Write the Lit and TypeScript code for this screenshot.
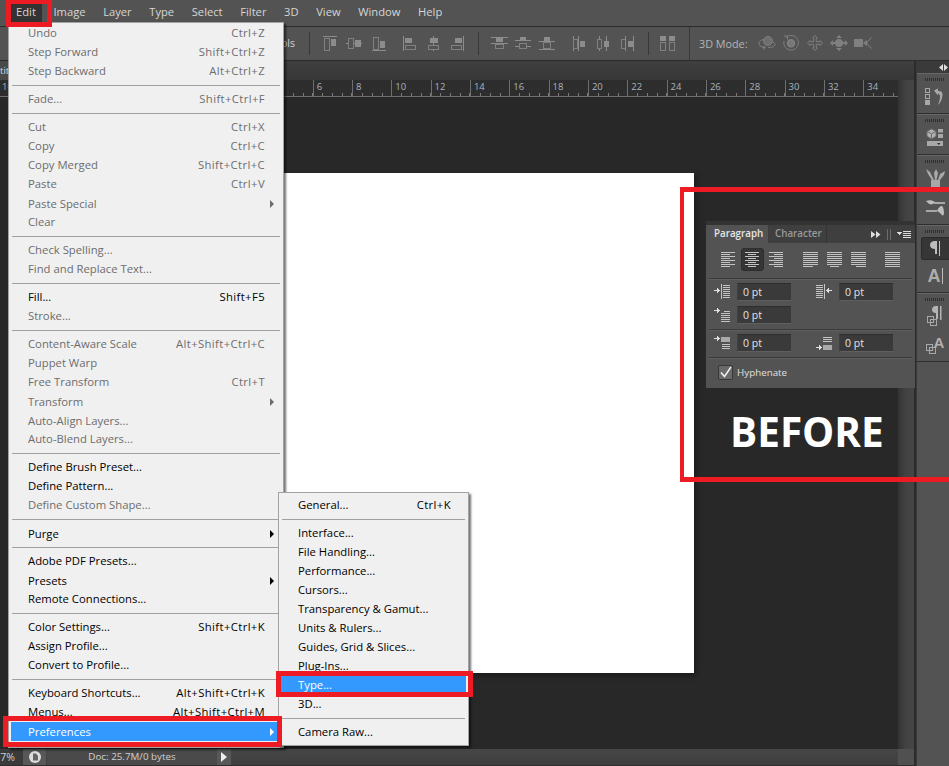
import { LitElement, html, css, svg } from "lit";
import { customElement } from "lit/decorators.js";

type Row = { t?: string; k?: string; d?: boolean; sub?: boolean; low?: boolean; hi?: boolean };
const S: Row = {};
const editMenu: Row[] = [
  { t: "Undo", k: "Ctrl+Z", d: true }, { t: "Step Forward", k: "Shift+Ctrl+Z", d: true }, { t: "Step Backward", k: "Alt+Ctrl+Z", d: true }, S,
  { t: "Fade...", k: "Shift+Ctrl+F", d: true }, S,
  { t: "Cut", k: "Ctrl+X", d: true }, { t: "Copy", k: "Ctrl+C", d: true }, { t: "Copy Merged", k: "Shift+Ctrl+C", d: true }, { t: "Paste", k: "Ctrl+V", d: true },
  { t: "Paste Special", d: true, sub: true, low: true }, { t: "Clear", d: true }, S,
  { t: "Check Spelling...", d: true }, { t: "Find and Replace Text...", d: true }, S,
  { t: "Fill...", k: "Shift+F5" }, { t: "Stroke...", d: true }, S,
  { t: "Content-Aware Scale", k: "Alt+Shift+Ctrl+C", d: true }, { t: "Puppet Warp", d: true }, { t: "Free Transform", k: "Ctrl+T", d: true },
  { t: "Transform", d: true, sub: true, low: true }, { t: "Auto-Align Layers...", d: true, low: true }, { t: "Auto-Blend Layers...", d: true }, S,
  { t: "Define Brush Preset..." }, { t: "Define Pattern..." }, { t: "Define Custom Shape...", d: true }, S,
  { t: "Purge", sub: true, low: true }, S,
  { t: "Adobe PDF Presets..." }, { t: "Presets", sub: true, low: true }, { t: "Remote Connections..." }, S,
  { t: "Color Settings...", k: "Shift+Ctrl+K" }, { t: "Assign Profile..." }, { t: "Convert to Profile..." }, S,
  { t: "Keyboard Shortcuts...", k: "Alt+Shift+Ctrl+K" }, { t: "Menus...", k: "Alt+Shift+Ctrl+M" },
  { t: "Preferences", sub: true, low: true, hi: true },
];
const prefMenu: Row[] = [
  { t: "General...", k: "Ctrl+K" }, S,
  { t: "Interface..." }, { t: "File Handling..." }, { t: "Performance..." }, { t: "Cursors..." }, { t: "Transparency & Gamut..." },
  { t: "Units & Rulers..." }, { t: "Guides, Grid & Slices..." }, { t: "Plug-Ins..." }, { t: "Type...", hi: true }, { t: "3D..." }, S,
  { t: "Camera Raw..." },
];
const menus = ["Edit", "Image", "Layer", "Type", "Select", "Filter", "3D", "View", "Window", "Help"];
// Labels of the cells that lie wholly behind the open menu are left out.
const rulerNums = ["10", "", "", "", "", "", "", "", "6", "8", "10", "12", "14", "16", "18", "20", "22", "24", "26", "28", "30", "32", "34"];

const G = "#8c8c8c";
const ic = (w: number, h: number, body: unknown) =>
  html`<svg width=${w} height=${h} viewBox="0 0 ${w} ${h}" fill="none" shape-rendering="crispEdges">${body}</svg>`;
const ol = (x: number, y: number, w: number, h: number) => svg`<rect x=${x + 0.5} y=${y + 0.5} width=${w - 1} height=${h - 1} stroke="#808080"/>`;
const so = (x: number, y: number, w: number, h: number) => svg`<rect x=${x} y=${y} width=${w} height=${h} fill=${G}/>`;

const alignIcons = [
  ic(14, 15, [so(0, 0, 14, 1), ol(1, 2, 6, 13), so(8, 3, 5, 7)]),
  ic(16, 15, [so(0, 7, 2, 1), so(8, 7, 1, 1), so(15, 7, 1, 1), ol(2, 2, 6, 11), so(9, 4, 6, 7)]),
  ic(14, 15, [so(0, 14, 14, 1), ol(1, 1, 6, 13), so(8, 5, 5, 7)]),
  ic(13, 15, [so(0, 0, 1, 15), so(2, 2, 7, 5), ol(2, 9, 11, 5)]),
  ic(12, 15, [so(5, 0, 1, 2), so(5, 7, 1, 2), so(5, 14, 1, 1), so(2, 2, 8, 5), ol(0, 9, 11, 5)]),
  ic(13, 15, [so(12, 0, 1, 15), so(4, 2, 7, 5), ol(0, 9, 11, 5)]),
];
const distIcons = [
  ic(17, 15, [so(0, 1, 17, 1), so(5, 2, 7, 4), so(0, 7, 17, 1), ol(4, 8, 9, 5)]),
  ic(16, 15, [so(5, 1, 6, 3), so(0, 4, 16, 1), ol(4, 7, 8, 6), so(0, 10, 4, 1), so(12, 10, 4, 1)]),
  ic(16, 15, [so(5, 1, 6, 4), so(0, 5, 16, 1), ol(4, 6, 8, 7), so(0, 13, 16, 1)]),
  ic(13, 15, [so(0, 0, 1, 15), ol(0, 3, 5, 10), so(5, 0, 1, 15), so(7, 5, 5, 6)]),
  ic(12, 15, [ol(0, 3, 5, 10), so(2, 0, 1, 3), so(2, 13, 1, 2), so(9, 0, 1, 15), so(7, 5, 5, 6)]),
  ic(13, 15, [ol(0, 3, 5, 10), so(4, 0, 1, 15), so(7, 5, 5, 6), so(12, 0, 1, 15)]),
];
const distSpace = ic(16, 15, [so(1, 0, 6, 5), so(10, 0, 6, 5), ol(1, 6, 6, 9), ol(10, 6, 6, 9)]);
const M = "#808080";
const mode3d = [
  html`<svg width="18" height="16" viewBox="0 0 18 16" fill="none" stroke=${M}><circle cx="10" cy="6" r="4.500" fill="#6f6f6f"/><path d="M6 4.500C2 5 .5 7 1 9s3 3.500 6 3.700M5 15l2.500-2.400L5 11M10 12.700c3.500 0 6.500-1 7-3 .2-1-.5-2-2-2.700"/></svg>`,
  html`<svg width="16" height="16" viewBox="0 0 16 16" fill="none" stroke=${M}><path d="M3 2.500A7.300 7.300 0 1 1 1 6"/><path d="M1 1h3.500v3.500"/><circle cx="8" cy="8.300" r="3.500" fill="#777" stroke-width="1.500"/></svg>`,
  html`<svg width="16" height="16" viewBox="0 0 16 16" fill="none" stroke=${M}><path d="M8 .5l2.400 2.600H9.300v3.600h3.600V5.500L15.500 8l-2.600 2.500V9.300H9.300v3.600h1.100L8 15.500l-2.400-2.600h1.100V9.300H3.100v1.200L.5 8l2.600-2.500v1.200h3.600V3.100H5.600z"/></svg>`,
  html`<svg width="18" height="16" viewBox="0 0 18 16" fill=${M}><path d="M9 0l3 3H6zM9 16l3-3H6zM0 8l3-3v6zM18 8l-3-3v6z"/><circle cx="9" cy="8" r="4"/><path d="M3 7h12v2H3z"/></svg>`,
  html`<svg width="18" height="16" viewBox="0 0 18 16" fill="none"><rect x="0" y="4" width="9" height="8" rx="1" fill=${M}/><path d="M9 8l4-3v6z" fill=${M}/><path d="M17.500 2.500L12.500 8l5 5.500" stroke=${M}/></svg>`,
];

const grip = html`<div class="grip"></div>`;
const D = "#a8a8a8";
const dockIcons = {
  history: html`<svg width="22" height="19" viewBox="0 0 22 19" fill="none"><g shape-rendering="crispEdges" stroke=${D}><rect x="1.500" y="1.500" width="4" height="4"/><rect x="1.500" y="7.500" width="4" height="4"/></g><rect x="1" y="13" width="5" height="5" fill=${D}/><path d="M10 3.500l4 -2v2.500c5-.5 5 3 4 7-.5 2.500-2 5-4 7 1-3 2-6 2-8 0-2-1-3.500-2-3.500v2z" fill=${D}/></svg>`,
  props: html`<svg width="18" height="19" viewBox="0 0 18 19" fill="none"><path d="M5.500 1L10 3.300v5L5.500 11 1 8.300v-5z" fill="#b0b0b0" stroke="#6c6c6c"/><path d="M1 3.300l4.500 2.500L10 3.300M5.500 5.800V11" stroke="#6c6c6c"/><rect x="12" y="1" width="5" height="3.500" fill=${D}/><rect x="12" y="6" width="5" height="4" fill=${D}/><rect x="1" y="13" width="16" height="5" fill=${D}/><path d="M11 15h3.500l-1.700 2z" fill="#333"/></svg>`,
  brushes: html`<svg width="19" height="20" viewBox="0 0 19 20"><path d="M5 12h9v8H5z" fill="#a8a8a8"/><path d="M6 12L2 6 0 1l4 3 4 8zM9 12L8 5l2-4 2 4-1.500 7zM12 12l2-6 5-3-1 4-4 5z" fill="#a8a8a8"/></svg>`,
  sliders: html`<svg width="19" height="18" viewBox="0 0 19 18"><rect x="8" y="3" width="11" height="2" fill="#a8a8a8"/><path d="M0 2c3-1 6-1 9 1-2 3-5 3-7 1z" fill="#bdbdbd"/><rect x="0" y="11" width="11" height="2" fill="#a8a8a8"/><path d="M11 12c1-3 3-5 5-5 1 0 2 4 2 7s-2 3-3 1c-1-1-2-2-4-3z" fill="#bdbdbd"/></svg>`,
  para: html`<svg width="12" height="15" viewBox="0 0 12 15"><path d="M5 0h2v13H5V8C2 8 0 6.500 0 4S2 0 5 0z" fill="#bdbdbd"/><rect x="9" y="0" width="1" height="15" fill="#bdbdbd"/></svg>`,
  a: html`<span class="dock-a">A<i></i></span>`,
  paraSq: html`<svg width="17" height="21" viewBox="0 0 17 21"><path d="M9 0h2v13H9V7C6.500 7 5 6 5 3.500S7 0 9 0z" fill="#b4b4b4"/><rect x="13" y="0" width="1.500" height="14" fill="#b4b4b4"/><g fill="none" stroke="#a8a8a8" shape-rendering="crispEdges"><rect x=".5" y="10.500" width="6" height="6"/><rect x="3.500" y="13.500" width="6" height="6"/></g></svg>`,
  aSq: html`<span class="dock-asq"><svg width="10" height="10" viewBox="0 0 10 10" fill="none" stroke="#a8a8a8" shape-rendering="crispEdges"><rect x=".5" y=".5" width="6" height="6"/><rect x="3.500" y="3.500" width="6" height="6"/></svg><b>A</b></span>`,
};

const lineRows: Record<string, number[][]> = {
  left: [[0, 14], [0, 9], [0, 14], [0, 9], [0, 14], [0, 9], [0, 14], [0, 9]],
  center: [[0, 14], [3, 8], [0, 14], [3, 8], [0, 14], [3, 8], [0, 14], [3, 8]],
  right: [[0, 14], [5, 9], [0, 14], [5, 9], [0, 14], [5, 9], [0, 14], [5, 9]],
  jl: [[0, 15], [0, 15], [0, 15], [0, 15], [0, 15], [0, 15], [0, 15], [0, 10]],
  jc: [[0, 15], [0, 15], [0, 15], [0, 15], [0, 15], [0, 15], [0, 15], [3, 9]],
  jr: [[0, 15], [0, 15], [0, 15], [0, 15], [0, 15], [0, 15], [0, 15], [5, 10]],
  jf: [[0, 15], [0, 15], [0, 15], [0, 15], [0, 15], [0, 15], [0, 15], [0, 15]],
};
const lines = (k: string) => html`<svg width="15" height="15" viewBox="0 0 15 15" shape-rendering="crispEdges">${lineRows[k].map((r, i) => svg`<rect x=${r[0]} y=${i * 2} width=${r[1]} height="1" fill="#c4c4c4"/>`)}</svg>`;
const L = "#c4c4c4";
const hl = (x: number, ys: number[], w: number) => ys.map((y) => svg`<rect x=${x} y=${y} width=${w} height="1" fill=${L}/>`);
const arrowR = (x: number, y: number) => svg`<path transform="translate(${x} ${y})" d="M0 0h3v-2h1v1h1v1h1v1H5v1H4v1H3v-2H0z" fill="#e0e0e0"/>`;
const arrowL = (x: number, y: number) => svg`<path transform="translate(${x} ${y})" d="M6 0H3v-2H2v1H1v1H0v1h1v1h1v1h1v-2h3z" fill="#e0e0e0"/>`;
const ind = {
  left: html`<svg width="16" height="16" viewBox="0 0 16 16" shape-rendering="crispEdges">${arrowR(0, 6)}<rect x="7" y="0" width="1" height="15" fill=${L}/>${hl(9, [1, 3, 5, 7, 9, 11, 13], 7)}</svg>`,
  right: html`<svg width="16" height="16" viewBox="0 0 16 16" shape-rendering="crispEdges">${hl(0, [1, 3, 5, 7, 9, 11, 13], 7)}<rect x="8" y="0" width="1" height="15" fill=${L}/>${arrowL(10, 6)}</svg>`,
  first: html`<svg width="16" height="16" viewBox="0 0 16 16" shape-rendering="crispEdges">${arrowR(0, 3)}${hl(10, [4], 6)}${hl(7, [6, 8, 10, 12, 14], 9)}</svg>`,
  before: html`<svg width="16" height="18" viewBox="0 0 16 18" shape-rendering="crispEdges">${arrowR(0, 4)}<rect x="7" y="3" width="9" height="5" fill="#a9a9a9"/>${hl(8, [10, 12, 14], 8)}</svg>`,
  after: html`<svg width="16" height="18" viewBox="0 0 16 18" shape-rendering="crispEdges">${hl(7, [3, 5, 7], 9)}<rect x="7" y="11" width="9" height="5" fill="#a9a9a9"/>${arrowR(0, 13)}</svg>`,
};

@customElement("app-root")
export class AppRoot extends LitElement {
  static styles = css`
    :host { display: block; width: 949px; height: 766px; overflow: hidden; position: relative; background: #282828;
      font-family: "Open Sans", "Noto Sans", "Liberation Sans", sans-serif; font-size: 11.3px; }
    * { box-sizing: border-box; }
    .app { display: flex; flex-direction: column; height: 766px; }
    .menubar { height: 27px; background: #535353; border-bottom: 1px solid #2b2b2b; display: flex; align-items: center; gap: 17.6px; padding: 0 0 3px 16px; color: #d6d6d6; font-size: 11.2px; position: relative; flex: none; }
    .menubar .active { position: relative; }
    .menubar .active::before { content: ""; position: absolute; inset: -3px -6px -3px -6px; background: #333; z-index: 0; }
    .menubar .active span { position: relative; }
    .options { height: 34px; flex: none; background: #535353; border-bottom: 1px solid #2b2b2b; display: flex; align-items: center; color: #cfcfcf; padding-bottom: 1px; }
    .ols { width: 295px; text-align: right; white-space: nowrap; overflow: hidden; flex: none; font-size: 10.5px; }
    .vsep { width: 1px; height: 23px; background: #383838; flex: none; }
    .vsep.full { height: 33px; }
    .gap { flex: none; }
    .mode { color: #b5b5b5; font-size: 10.8px; flex: none; white-space: nowrap; width: 59px; margin-left: 9px; }
    .main { flex: 1; display: flex; min-height: 0; }
    .center { width: 914px; display: flex; flex-direction: column; flex: none; }
    .tabs { height: 19px; background: linear-gradient(#3f3f3f, #383838); flex: none; display: flex; }
    .tabs span { width: 8px; overflow: hidden; background: #4a4a4a; color: #ddd; font-size: 9.5px; white-space: nowrap; line-height: 19px; }
    .mid { flex: 1; display: flex; min-height: 0; }
    .leftcol { width: 898px; display: flex; flex-direction: column; flex: none; }
    .ruler { height: 17px; flex: none; display: flex; margin-left: -2px; background: #2d2d2d; border-bottom: 1px solid #6e6e6e; overflow: hidden; }
    .cell { width: 39.33px; flex: none; border-left: 1px solid #6e6e6e; color: #a9b4bf; font-size: 9.5px; line-height: 13px; padding-left: 3px;
      background: repeating-linear-gradient(to right, #7a7a7a 0 1px, transparent 1px 9.83px) left 8.8px bottom / 100% 3px no-repeat; height: 16px; }
    .canvas { flex: 1; background: #282828; padding-top: 76px; min-height: 0; }
    .page { width: 500px; height: 500px; margin-left: 194px; background: #fff; box-shadow: 2px 3px 6px rgba(0,0,0,.35); }
    .vscroll { width: 16px; flex: none; background: linear-gradient(to right, #333, #434343 50%, #454545); }
    .bottom { height: 17px; flex: none; display: flex; background: linear-gradient(#464646, #3e3e3e); border-bottom: 1px solid #2e2e2e; color: #cfcfcf; align-items: stretch; }
    .zoomv { width: 23px; background: #3a3a3a; font-size: 10.5px; line-height: 16px; direction: rtl; overflow: hidden; padding-right: 8px; flex: none; }
    .sb { width: 23px; background: #585858; flex: none; display: flex; align-items: center; justify-content: center; }
    .doc { width: 170px; background: #4a4a4a; margin-left: 1px; text-align: center; font-size: 9.8px; line-height: 16px; flex: none; white-space: nowrap; }
    .play { width: 14px; background: #585858; flex: none; display: flex; align-items: center; justify-content: center; }
    .play i { border-left: 6px solid #eee; border-top: 5px solid transparent; border-bottom: 5px solid transparent; }
    .fill { flex: 1; }
    .corner { width: 16px; background: #505050; flex: none; }
    .divider { width: 3px; background: #2b2b2b; border-right: 1px solid #3a3a3a; flex: none; }
    .dock { flex: 1; background: #535353; display: flex; flex-direction: column; }
    .dock-head { height: 12px; background: #3a3a3a; display: flex; align-items: center; justify-content: flex-end; padding-right: 1px; flex: none; }
    .dgroup { border-bottom: 1px solid #2e2e2e; border-top: 1px solid #676767; padding: 4px 0 0 4px; display: flex; flex-direction: column; align-items: center; flex: none; }
    .h41 { height: 41px; } .h70 { height: 70px; } .h68 { height: 68px; } .h69 { height: 69px; }
    .grip { width: 19px; height: 3px; flex: none; background: repeating-linear-gradient(to right, #2f2f2f 0 1px, transparent 1px 2px); margin-bottom: 4px; margin-left: -2px; }
    .dbtn { width: 28px; height: 23px; display: flex; align-items: center; justify-content: center; flex: none; }
    .dbtn.b21 { height: 21px; }
    .dbtn.b22 { height: 22px; }
    .dbtn.mt4 { margin-top: 4px; }
    .dbtn.mt6 { margin-top: 6px; }
    .dbtn.mt8 { margin-top: 8px; }
    .dbtn.on { background: #363636; border-radius: 3px 0 0 3px; border: 1px solid #2a2a2a; border-right: 0; }
    .dock-a { color: #adadad; font-size: 18px; line-height: 20px; font-weight: 700; display: flex; align-items: center; font-family: "Liberation Sans", sans-serif; }
    .dock-a i { width: 1px; height: 16px; background: #bbb; margin-left: 1px; }
    .dock-asq { display: flex; align-items: flex-end; color: #b0b0b0; }
    .dock-asq b { font-size: 15px; line-height: 15px; font-weight: 700; font-family: "Liberation Sans", sans-serif; margin-bottom: 4px; margin-left: -2px; }

    .menu { position: absolute; background: #f0f0f0; border: 1px solid #a3a3a3; color: #000; z-index: 5; box-shadow: 2px 2px 2px rgba(0,0,0,.55); }
    .edit { left: 8px; top: 22px; width: 276px; padding: 1px 2px 6px; }
    .prefs { left: 278px; top: 492px; width: 191px; padding: 3px 2px 3px; z-index: 6; }
    .row { height: 19px; display: flex; align-items: center; padding: 0 16px 2px 17px; white-space: nowrap; justify-content: space-between; position: relative; }
    .prefs .row { padding-right: 15px; }
    .row.low { padding-bottom: 0; }
    .row.dis { color: #6d6d6d; }
    .row.hi { background: #3399ff; color: #fff; }
    .row .k { letter-spacing: .38px; }
    .row .arrow { position: absolute; right: 7px; top: 6px; border-left: 4px solid #000; border-top: 4px solid transparent; border-bottom: 4px solid transparent; }
    .row.dis .arrow { border-left-color: #6d6d6d; }
    .row.hi .arrow { border-left-color: #fff; }
    .sep { height: 9px; display: flex; align-items: center; }
    .sep::before { content: ""; flex: 1; height: 1px; background: #a0a0a0; margin: 0 1px; }

    .panel { position: absolute; left: 706px; top: 221px; width: 209px; height: 167px; background: #535353; z-index: 2; color: #ddd; border-top: 4px solid #333; display: flex; flex-direction: column; }
    .ptabs { height: 18px; background: #3f3f3f; display: flex; align-items: stretch; font-size: 9.8px; flex: none; }
    .ptab { padding: 0 7px 0 8px; line-height: 17px; width: 62px; background: #535353; color: #e6e6e6; flex: none; white-space: nowrap; font-weight: 600; }
    .ptab2 { width: 59px; padding-left: 7px; line-height: 17px; color: #999; border-right: 1px solid #353535; font-weight: 600; white-space: nowrap; flex: none; }
    .pctrl { flex: 1; display: flex; align-items: center; justify-content: flex-end; gap: 6px; padding-right: 4px; color: #ccc; }
    .pctrl .bar { width: 4px; height: 11px; border-left: 1px solid #6c6c6c; border-right: 1px solid #6c6c6c; }
    .aligns { height: 35px; display: flex; align-items: center; padding: 0 0 2px 15px; flex: none; }
    .ab { width: 15px; height: 15px; flex: none; display: block; }
    .ab.on { position: relative; }
    .ab.on::before { content: ""; position: absolute; inset: -4px -4px -4px -4px; background: #353535; border: 1px solid #2e2e2e; border-radius: 3px; }
    .ab.on svg { position: relative; }
    .psep { height: 1px; background: #3a3a3a; margin: 0 3px 0 3px; flex: none; box-shadow: 0 1px 0 #5e5e5e; }
    .prow { display: flex; align-items: center; padding-left: 8px; height: 18px; flex: none; margin-top: 4px; }
    .prow + .prow { margin-top: 5px; }
    .prow svg { flex: none; }
    .inp { width: 54px; height: 18px; flex: none; margin-left: 7px; background: #3a3a3a; border-top: 1px solid #2e2e2e; border-bottom: 1px solid #5f5f5f; border-left: 1px solid #404040; padding-left: 5px; font-size: 10.5px; line-height: 16px; color: #e4e4e4; }
    .psep.mt { margin-top: 5px; }
    .hy { display: flex; align-items: center; padding-left: 12px; gap: 4px; margin-top: 7px; font-size: 9.8px; color: #e0e0e0; }
    .cb { width: 15px; height: 15px; background: #6a6a6a; border: 1px solid #383838; border-radius: 2px; flex: none; display: flex; }
    .before { position: absolute; left: 730px; top: 405px; color: #fff; font-weight: 700; font-size: 40.5px; line-height: 54px; z-index: 2; }

    .redbox { position: absolute; border: 5px solid #ed1c24; z-index: 8; }
    .rb-edit { left: 6px; top: -1px; width: 46px; height: 28px; }
    .rb-before { left: 680px; top: 187px; width: 280px; height: 295px; border-left-width: 4px; }
    .rb-pref { left: 3px; top: 716px; width: 279px; height: 31px; }
    .rb-type { left: 276px; top: 671px; width: 197px; height: 26px; }
  `;

  private rows(list: Row[]) {
    return list.map((r) =>
      r === S
        ? html`<div class="sep"></div>`
        : html`<div class="row ${r.d ? "dis" : ""} ${r.low ? "low" : ""} ${r.hi ? "hi" : ""}">
            <span>${r.t}</span>${r.k ? html`<span class="k">${r.k}</span>` : ""}${r.sub ? html`<i class="arrow"></i>` : ""}
          </div>`
    );
  }

  render() {
    const gap = (w: number) => html`<div class="gap" style="width:${w}px"></div>`;
    return html`
      <div class="app">
        <div class="menubar">
          ${menus.map((m, i) => html`<div class=${i === 0 ? "active" : ""}><span>${m}</span></div>`)}
        </div>
        <div class="options">
          <div class="ols">ols</div>
          ${gap(14)}<div class="vsep"></div>${gap(13)}
          ${alignIcons[0]}${gap(9)}${alignIcons[1]}${gap(10)}${alignIcons[2]}${gap(17)}
          ${alignIcons[3]}${gap(12)}${alignIcons[4]}${gap(11)}${alignIcons[5]}${gap(14)}
          <div class="vsep"></div>${gap(12)}
          ${distIcons[0]}${gap(7)}${distIcons[1]}${gap(8)}${distIcons[2]}${gap(18)}
          ${distIcons[3]}${gap(11)}${distIcons[4]}${gap(12)}${distIcons[5]}${gap(14)}
          <div class="vsep"></div>${gap(10)}${distSpace}${gap(14)}
          <div class="vsep full"></div>
          <div class="mode">3D Mode:</div>
          ${mode3d[0]}${gap(7)}${mode3d[1]}${gap(8)}${mode3d[2]}${gap(7)}${mode3d[3]}${gap(6)}${mode3d[4]}
        </div>
        <div class="main">
          <div class="center">
            <div class="tabs"><span>tit</span></div>
            <div class="mid">
              <div class="leftcol">
                <div class="ruler">${rulerNums.map((n) => html`<div class="cell">${n}</div>`)}</div>
                <div class="canvas"><div class="page"></div></div>
              </div>
              <div class="vscroll"></div>
            </div>
            <div class="bottom">
              <div class="zoomv">7%</div>
              <div class="sb"><svg width="14" height="14" viewBox="0 0 14 14"><circle cx="7" cy="7" r="6" fill="#ddd"/><path d="M5 3.500h3l2 2.500v4.500H5z" fill="#666"/></svg></div>
              <div class="doc">Doc: 25.7M/0 bytes</div>
              <div class="play"><i></i></div>
              <div class="fill"></div>
              <div class="corner"></div>
            </div>
          </div>
          <div class="divider"></div>
          <div class="dock">
            <div class="dock-head"><svg width="9" height="7" viewBox="0 0 9 7" fill="#ddd"><path d="M4 0v7L0 3.500zM5 0v7l4-3.500z"/></svg></div>
            <div class="dgroup h41">${grip}<div class="dbtn">${dockIcons.history}</div></div>
            <div class="dgroup h41">${grip}<div class="dbtn">${dockIcons.props}</div></div>
            <div class="dgroup h70">${grip}<div class="dbtn b21">${dockIcons.brushes}</div><div class="dbtn mt8">${dockIcons.sliders}</div></div>
            <div class="dgroup h68">${grip}<div class="dbtn on">${dockIcons.para}</div><div class="dbtn mt4">${dockIcons.a}</div></div>
            <div class="dgroup h69">${grip}<div class="dbtn b22">${dockIcons.paraSq}</div><div class="dbtn mt6">${dockIcons.aSq}</div></div>
          </div>
        </div>
      </div>

      <div class="menu edit">${this.rows(editMenu)}</div>
      <div class="menu prefs">${this.rows(prefMenu)}</div>

      <div class="panel">
        <div class="ptabs">
          <div class="ptab">Paragraph</div><div class="ptab2">Character</div>
          <div class="pctrl">
            <svg width="10" height="7" viewBox="0 0 10 7" fill="#ddd"><path d="M0 0l4.500 3.500L0 7zM5 0l4.500 3.500L5 7z"/></svg>
            <span class="bar"></span>
            <svg width="14" height="7" viewBox="0 0 14 7" shape-rendering="crispEdges"><path d="M0 1h5L2.500 4z" fill="#ddd"/><g fill="#ddd"><rect x="6" y="0" width="8" height="1"/><rect x="6" y="2" width="8" height="1"/><rect x="6" y="4" width="8" height="1"/><rect x="6" y="6" width="8" height="1"/></g></svg>
          </div>
        </div>
        <div class="aligns">
          <span class="ab">${lines("left")}</span>${gap(9)}
          <span class="ab on">${lines("center")}</span>${gap(9)}
          <span class="ab">${lines("right")}</span>${gap(19)}
          <span class="ab">${lines("jl")}</span>${gap(9)}
          <span class="ab">${lines("jc")}</span>${gap(9)}
          <span class="ab">${lines("jr")}</span>${gap(19)}
          <span class="ab">${lines("jf")}</span>
        </div>
        <div class="psep"></div>
        <div class="prow">${ind.left}<div class="inp">0 pt</div>${gap(25)}${ind.right}<div class="inp">0 pt</div></div>
        <div class="prow">${ind.first}<div class="inp">0 pt</div></div>
        <div class="psep mt"></div>
        <div class="prow">${ind.before}<div class="inp">0 pt</div>${gap(25)}${ind.after}<div class="inp">0 pt</div></div>
        <div class="psep mt"></div>
        <div class="hy"><span class="cb"><svg width="13" height="13" viewBox="0 0 13 13" fill="none"><path d="M2 6.500l3.500 4L12 1" stroke="#f2f2f2" stroke-width="1.500"/></svg></span>Hyphenate</div>
      </div>
      <div class="before">BEFORE</div>

      <div class="redbox rb-edit"></div>
      <div class="redbox rb-before"></div>
      <div class="redbox rb-pref"></div>
      <div class="redbox rb-type"></div>
    `;
  }
}
